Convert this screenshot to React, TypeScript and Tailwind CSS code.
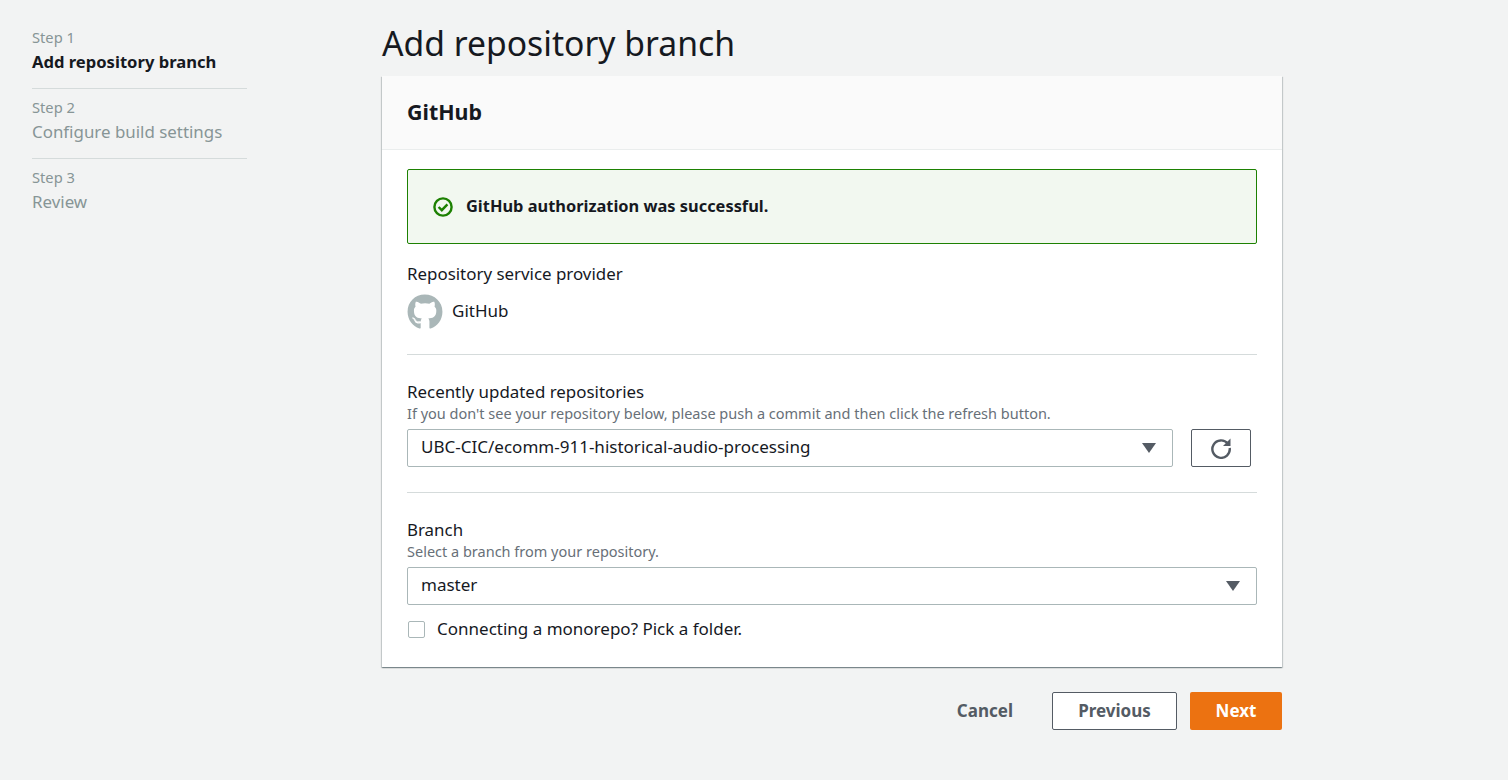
import { FaGithub } from 'react-icons/fa';

const steps = [
  { label: 'Step 1', title: 'Add repository branch', active: true },
  { label: 'Step 2', title: 'Configure build settings', active: false },
  { label: 'Step 3', title: 'Review', active: false },
];

function Caret() {
  return (
    <svg width="14" height="10" viewBox="0 0 14 10" className="shrink-0">
      <path d="M0 0h14L7 10z" fill="#545b64" />
    </svg>
  );
}

function Select({ value }: { value: string }) {
  return (
    <div className="flex h-[38px] w-full items-center justify-between rounded-[2px] border border-[#aab7b8] bg-white pl-[13px] pr-[16px] text-[17.03px] text-[#16191f]">
      <span className="-mt-[2px]">{value}</span>
      <Caret />
    </div>
  );
}

export default function App() {
  return (
    <div className="flex h-[780px] w-full overflow-hidden bg-[#f2f3f3] font-['Noto_Sans','Open_Sans',sans-serif] text-[#16191f]">
      {/* Wizard steps */}
      <nav className="ml-[32px] mt-[28px] w-[215px] shrink-0">
        {steps.map((step, index) => (
          <div
            key={step.label}
            className={`flow-root ${index === 0 ? 'h-[61px]' : 'h-[70px] pt-[9px]'} ${index < steps.length - 1 ? 'border-b border-[#d5dbdb]' : ''}`}
          >
            <div className="-mt-[1px] text-[14.7px] leading-[20px] text-[#879596]">{step.label}</div>
            <div className={`mt-[3px] leading-[24px] ${step.active ? 'text-[16.6px] font-bold text-[#16191f]' : 'text-[16.9px] text-[#879596]'}`}>
              {step.title}
            </div>
          </div>
        ))}
      </nav>

      <main className="ml-[135px] w-[900px] shrink-0">
        <h1 className="h-[76px] pt-[20px] text-[33.7px] leading-[46px] font-normal">Add repository branch</h1>

        <section className="bg-white shadow-[0_1px_1px_0_rgba(0,28,36,0.3),1px_1px_1px_0_rgba(0,28,36,0.15),-1px_1px_1px_0_rgba(0,28,36,0.15)]">
          <div className="flex h-[74px] items-center border-b border-[#eaeded] bg-[#fafafa] px-[25px]">
            <h2 className="pb-[2px] text-[21.4px] font-bold leading-[28px]">GitHub</h2>
          </div>

          <div className="px-[25px] pt-[19px]">
            <div className="flex h-[75px] items-center rounded-[2px] border border-[#1d8102] bg-[#f2f8f0] pl-[25px]">
              <svg width="20" height="20" viewBox="0 0 20 20" fill="none" stroke="#1d8102" strokeWidth="2.4" className="shrink-0">
                <circle cx="10" cy="10" r="8.6" />
                <path d="M5.6 10l3.2 3.2 5.6-5.8" />
              </svg>
              <span className="ml-[13px] text-[16.4px] font-bold">GitHub authorization was successful.</span>
            </div>

            <div className="mt-[18px] text-[16.9px] leading-[24px]">Repository service provider</div>
            <div className="mt-[8px] flex items-center">
              <FaGithub className="h-[36px] w-[36px] text-[#aab7b8]" />
              <span className="-mt-[2px] ml-[9px] text-[17px]">GitHub</span>
            </div>

            <div className="mt-[24px] border-t border-[#d5dbdb]" />

            <div className="mt-[25px] text-[16.9px] leading-[24px]">Recently updated repositories</div>
            <div className="text-[14.5px] leading-[19px] text-[#687078]">
              If you don't see your repository below, please push a commit and then click the refresh button.
            </div>
            <div className="mt-[6px] flex items-center">
              <div className="w-[766px]">
                <Select value="UBC-CIC/ecomm-911-historical-audio-processing" />
              </div>
              <button className="ml-[18px] flex h-[38px] w-[60px] items-center justify-center rounded-[2px] border border-[#545b64] bg-white">
                <svg width="22" height="22" viewBox="0 0 22 22" fill="none">
                  <path d="M17.8 6.6A8.7 8.7 0 1 0 19.7 11" stroke="#545b64" strokeWidth="2.4" />
                  <path d="M20.5 1.5v7.5h-7.5z" fill="#545b64" />
                </svg>
              </button>
            </div>

            <div className="mt-[25px] border-t border-[#d5dbdb]" />

            <div className="mt-[25px] text-[16.9px] leading-[24px]">Branch</div>
            <div className="text-[14.5px] leading-[19px] text-[#687078]">Select a branch from your repository.</div>
            <div className="mt-[6px]">
              <Select value="master" />
            </div>

            <label className="mt-[16px] flex items-center pb-[29px]">
              <span className="ml-[1px] h-[17px] w-[17px] rounded-[2px] border border-[#aab7b8] bg-white" />
              <span className="-mt-[2px] ml-[12px] text-[17px] leading-[17px]">Connecting a monorepo? Pick a folder.</span>
            </label>
          </div>
        </section>

        <div className="mt-[25px] flex items-center justify-end text-[17px] font-bold">
          <button className="mr-[39px] text-[#545b64]">Cancel</button>
          <button className="mr-[13px] h-[38px] w-[125px] rounded-[2px] border border-[#545b64] bg-white pb-[1px] text-[#545b64]">Previous</button>
          <button className="h-[38px] w-[92px] rounded-[2px] bg-[#ec7211] pb-[1px] text-white">Next</button>
        </div>
      </main>
    </div>
  );
}
